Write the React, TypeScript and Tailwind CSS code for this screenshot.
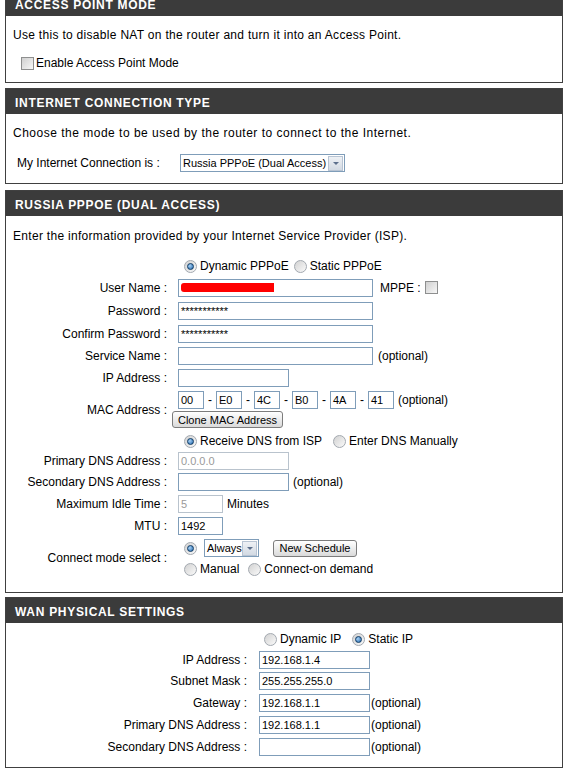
import type { ReactNode } from "react";

const Radio = ({ on }: { on?: boolean }) => (
  <span className="inline-flex h-[13px] w-[13px] shrink-0 items-center justify-center rounded-full border border-[#a3a9b0] bg-linear-to-br from-[#d2d2d2] to-[#fafafa]">
    {on && (
      <span className="h-[7px] w-[7px] rounded-full border border-[#0f3a63] bg-[radial-gradient(circle_at_35%_35%,#a9d2f5,#1f66ad)]" />
    )}
  </span>
);

const Check = () => (
  <span className="inline-block h-[13px] w-[13px] shrink-0 border border-[#8e8f8f] bg-linear-to-br from-[#d0d0d0] to-[#f7f7f7]" />
);

const Box = ({
  w,
  value,
  off,
  children,
}: {
  w: string;
  value?: string;
  off?: boolean;
  children?: ReactNode;
}) => (
  <div
    className={`flex h-[18px] shrink-0 items-center overflow-hidden whitespace-nowrap border px-[2px] text-[11px] ${w} ${
      off ? "border-[#b9c3cd] text-[#9a9a9a]" : "border-[#7f9db9] text-black"
    }`}
  >
    {value}
    {children}
  </div>
);

const Arrow = () => (
  <span className="ml-auto -mr-[1px] flex h-[15px] w-[15px] shrink-0 items-center justify-center border border-[#b8c4d3] bg-linear-to-b from-[#eef1f5] to-[#d3dae3]">
    <span className="border-x-[3px] border-t-[3px] border-x-transparent border-t-[#5c6f8c]" />
  </span>
);

const Btn = ({ w, text }: { w: string; text: string }) => (
  <div
    className={`flex h-[17px] items-center justify-center whitespace-nowrap rounded-[3px] border border-[#7c7c7c] bg-linear-to-b from-white to-[#dadada] text-[11px] ${w}`}
  >
    {text}
  </div>
);

const Opt = ({ on, text }: { on?: boolean; text: string }) => (
  <span className="flex items-center gap-[3px] whitespace-nowrap">
    <Radio on={on} />
    {text}
  </span>
);

// one label + field line of the PPPoE table
const Row = ({ label, h, children }: { label?: string; h: string; children: ReactNode }) => (
  <div className={`flex items-center ${h}`}>
    <div className="w-[161px] whitespace-nowrap text-right">{label}</div>
    <div className="ml-[11px] flex items-center whitespace-nowrap">{children}</div>
  </div>
);

const WanRow = ({ label, h, children }: { label?: string; h: string; children: ReactNode }) => (
  <div className={`flex items-center ${h}`}>
    <div className="w-[241px] whitespace-nowrap text-right">{label}</div>
    <div className="ml-[12px] flex items-center whitespace-nowrap">{children}</div>
  </div>
);

const Section = ({ title, className, children }: { title: string; className: string; children: ReactNode }) => (
  <div className={`border border-[#404040] bg-white ${className}`}>
    <div className="h-[25px] bg-[#3b3b3b] pl-[9px] pt-[7px] text-[12px] font-bold leading-[14px] tracking-[0.7px] text-white">
      {title}
    </div>
    {children}
  </div>
);

export default function App() {
  return (
    <div className="min-h-[775px] overflow-hidden bg-white font-['Liberation_Sans',Arial,sans-serif] text-[12px] leading-[14px] text-black">
      <div className="ml-[5px] w-[558px]">
        <Section title="ACCESS POINT MODE" className="-mt-[10px]">
          <div className="pb-[9px] pl-[7px] pt-[12px]">
            <p className="tracking-[0.3px]">Use this to disable NAT on the router and turn it into an Access Point.</p>
            <div className="mt-[11px] flex h-[20px] items-center gap-[2px] pl-[8px]">
              <Check />
              Enable Access Point Mode
            </div>
          </div>
        </Section>

        <Section title="INTERNET CONNECTION TYPE" className="mt-[5px]">
          <div className="pb-[10px] pl-[7px] pt-[12px]">
            <p className="tracking-[0.5px]">Choose the mode to be used by the router to connect to the Internet.</p>
            <div className="mt-[13px] flex h-[20px] items-center pl-[4px]">
              <span className="w-[163px]">My Internet Connection is :</span>
              <Box w="w-[165px]" value="Russia PPPoE (Dual Access)">
                <Arrow />
              </Box>
            </div>
          </div>
        </Section>

        <Section title="RUSSIA PPPOE (DUAL ACCESS)" className="mt-[6px]">
          <div className="pb-[13px] pt-[13px]">
            <p className="pl-[7px] tracking-[0.3px]">
              Enter the information provided by your Internet Service Provider (ISP).
            </p>
            <div className="mt-[13px]">
              <Row h="h-[20px]">
                <div className="ml-[6px] flex items-center gap-[5px]">
                  <Opt on text="Dynamic PPPoE" />
                  <Opt text="Static PPPoE" />
                </div>
              </Row>
              <Row label="User Name :" h="h-[23px]">
                <Box w="w-[195px]">
                  <span className="h-[9px] w-[93px] rounded-l-[3px] bg-[#ff0000]" />
                </Box>
                <span className="ml-[7px]">MPPE :</span>
                <span className="ml-[4px] flex">
                  <Check />
                </span>
              </Row>
              <Row label="Password :" h="h-[24px]">
                <Box w="w-[195px]" value="***********" />
              </Row>
              <Row label="Confirm Password :" h="h-[22px]">
                <Box w="w-[195px]" value="***********" />
              </Row>
              <Row label="Service Name :" h="h-[22px]">
                <Box w="w-[195px]" />
                <span className="ml-[5px]">(optional)</span>
              </Row>
              <Row label="IP Address :" h="h-[22px]">
                <Box w="w-[111px]" />
              </Row>
              <Row label="MAC Address :" h="h-[42px]">
                <div className="flex flex-col pb-[3px]">
                  <div className="flex h-[22px] items-center">
                    {["00", "E0", "4C", "B0", "4A", "41"].map((m, i) => (
                      <span key={m} className="flex items-center">
                        {i > 0 && <span className="w-[12px] text-center">-</span>}
                        <Box w="w-[26px]" value={m} />
                      </span>
                    ))}
                    <span className="ml-[4px]">(optional)</span>
                  </div>
                  <div className="-ml-[6px]">
                    <Btn w="w-[111px]" text="Clone MAC Address" />
                  </div>
                </div>
              </Row>
              <Row h="h-[20px]">
                <div className="ml-[6px] flex items-center gap-[11px]">
                  <Opt on text="Receive DNS from ISP" />
                  <Opt text="Enter DNS Manually" />
                </div>
              </Row>
              <Row label="Primary DNS Address :" h="h-[20px]">
                <Box w="w-[111px]" value="0.0.0.0" off />
              </Row>
              <Row label="Secondary DNS Address :" h="h-[22px]">
                <Box w="w-[111px]" />
                <span className="ml-[4px]">(optional)</span>
              </Row>
              <Row label="Maximum Idle Time :" h="h-[22px]">
                <Box w="w-[45px]" value="5" off />
                <span className="ml-[4px]">Minutes</span>
              </Row>
              <Row label="MTU :" h="h-[22px]">
                <Box w="w-[45px]" value="1492" />
              </Row>
              <Row label="Connect mode select :" h="h-[42px]">
                <div className="flex flex-col">
                  <div className="flex h-[22px] items-center">
                    <span className="ml-[6px] flex">
                      <Radio on />
                    </span>
                    <div className="ml-[7px]">
                      <Box w="w-[55px]" value="Always">
                        <Arrow />
                      </Box>
                    </div>
                    <div className="ml-[14px]">
                      <Btn w="w-[84px]" text="New Schedule" />
                    </div>
                  </div>
                  <div className="ml-[6px] flex h-[20px] items-center gap-[9px]">
                    <Opt text="Manual" />
                    <Opt text="Connect-on demand" />
                  </div>
                </div>
              </Row>
            </div>
          </div>
        </Section>

        <Section title="WAN PHYSICAL SETTINGS" className="mt-[4px]">
          <div className="pb-[9px] pt-[6px]">
            <WanRow h="h-[20px]">
              <div className="ml-[5px] flex items-center gap-[11px]">
                <Opt text="Dynamic IP" />
                <Opt on text="Static IP" />
              </div>
            </WanRow>
            <WanRow label="IP Address :" h="h-[21px]">
              <Box w="w-[111px]" value="192.168.1.4" />
            </WanRow>
            <WanRow label="Subnet Mask :" h="h-[22px]">
              <Box w="w-[111px]" value="255.255.255.0" />
            </WanRow>
            <WanRow label="Gateway :" h="h-[22px]">
              <Box w="w-[111px]" value="192.168.1.1" />
              <span className="ml-[1px]">(optional)</span>
            </WanRow>
            <WanRow label="Primary DNS Address :" h="h-[22px]">
              <Box w="w-[111px]" value="192.168.1.1" />
              <span className="ml-[1px]">(optional)</span>
            </WanRow>
            <WanRow label="Secondary DNS Address :" h="h-[22px]">
              <Box w="w-[111px]" />
              <span className="ml-[1px]">(optional)</span>
            </WanRow>
          </div>
        </Section>
      </div>
    </div>
  );
}
